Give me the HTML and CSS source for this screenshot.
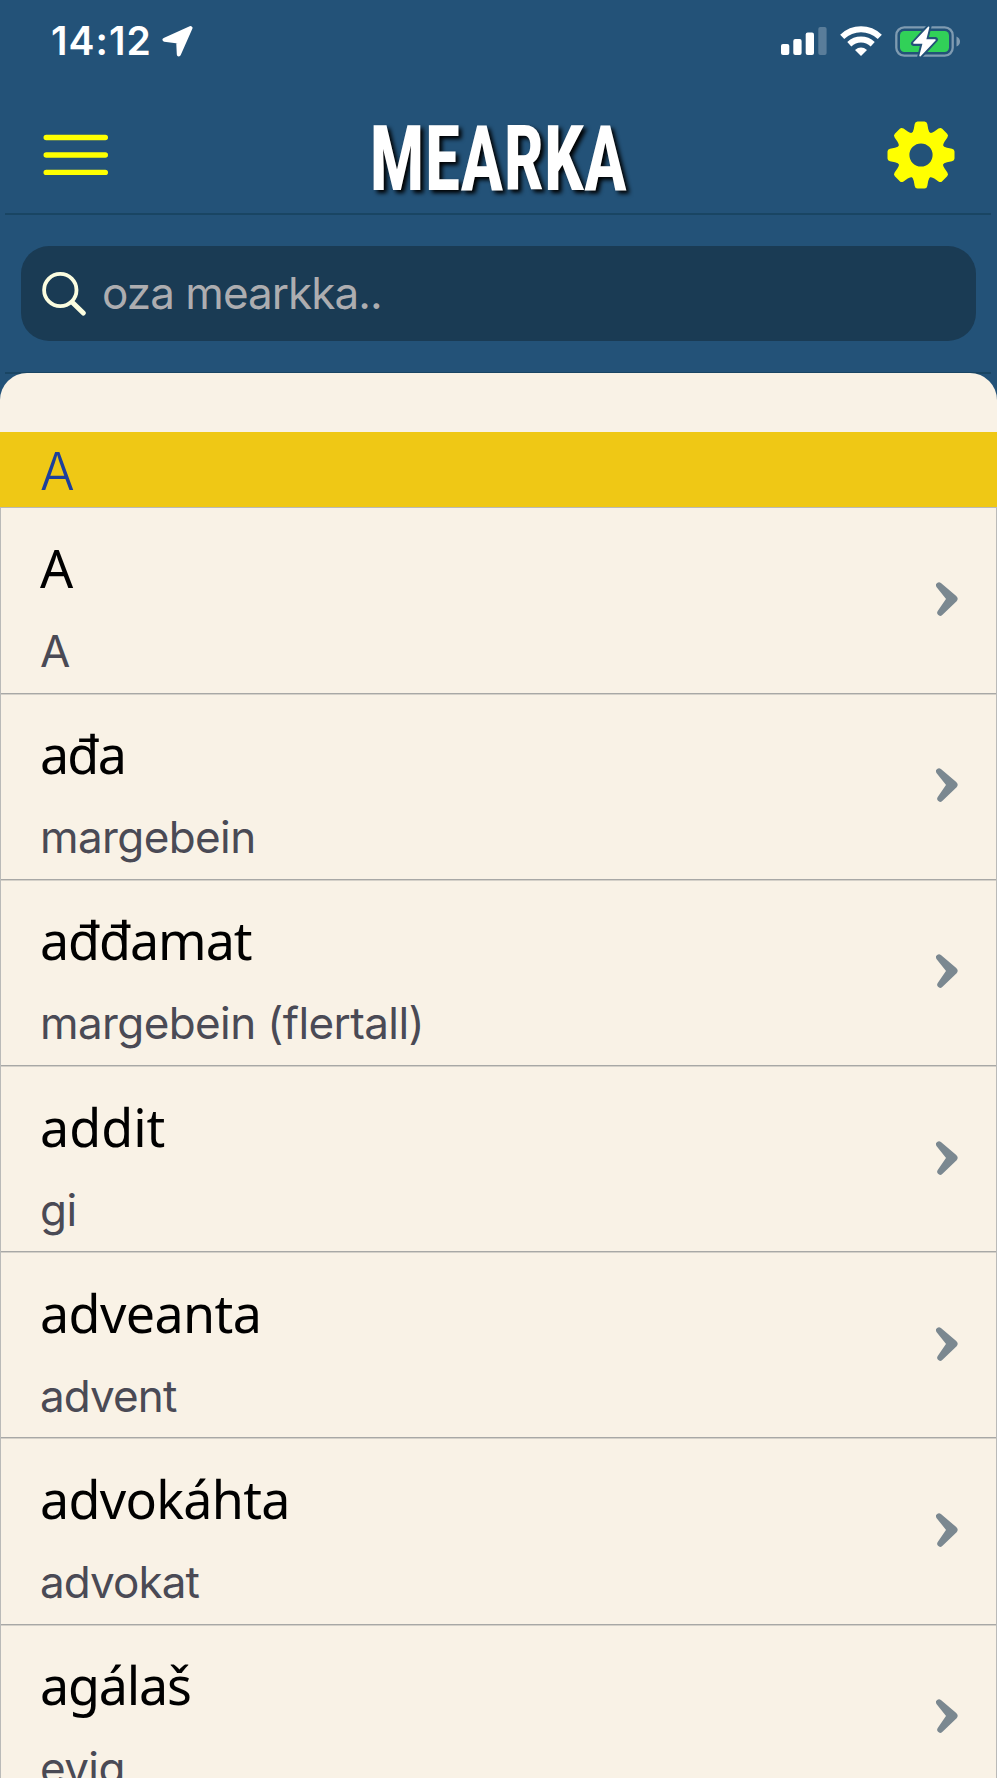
FILE: index.html
```html
<!DOCTYPE html>
<html lang="se">
<head>
<meta charset="utf-8">
<title>MEARKA</title>
<link rel="stylesheet" href="styles.css">
</head>
<body>
<svg width="0" height="0" class="defs">
  <symbol id="chevron" viewBox="0 0 22 34"><path d="M3 3.300 18.300 16.300Q18.800 16.800 18.300 17.400L4.200 30.800 13.800 16.800Z" fill="currentColor" stroke="currentColor" stroke-width="6" stroke-linejoin="round"/></symbol>
</svg>
<div class="app">
  <header class="top">
    <div class="status">
      <div class="status-left">
        <span class="time">14:12</span>
        <svg width="32" height="32" viewBox="0 0 32 32"><path d="M28.500 3 2.500 14.700 16.200 16.400 16.800 29.400Z" fill="#fff" stroke="#fff" stroke-width="4" stroke-linejoin="round"/></svg>
      </div>
      <div class="status-right">
        <svg width="46" height="30" viewBox="0 0 46 30" fill="#fff"><rect x="0" y="18" width="8.300" height="11" rx="2"/><rect x="12.300" y="13" width="8.300" height="16" rx="2"/><rect x="24.700" y="6.500" width="8.300" height="22.500" rx="2"/><rect x="37.300" y="1" width="8.300" height="28" rx="2" opacity=".25"/></svg>
        <svg width="42" height="31" viewBox="0 0 42 31" fill="none" stroke="#fff" stroke-width="6"><path d="M2.200 10.900C13 .8 29 .8 39.800 10.900"/><path d="M9.300 18.200C16 12 26 12 32.700 18.200"/><path d="M21 30 15 23.900Q21 19 27 23.900Z" fill="#fff" stroke="none"/></svg>
        <svg width="66" height="32" viewBox="0 0 66 32"><rect x="1.300" y="1.300" width="56.400" height="28.400" rx="8" fill="none" stroke="#7f9bb1" stroke-width="2.300"/><rect x="5" y="5" width="49" height="21" rx="4.500" fill="#31d158"/><path d="M61.500 10.500Q65 12 65 15.500T61.500 20.500Z" fill="#7f9bb1"/><path d="M34 .5 18.500 17.500H28L24.800 30.500 40.500 13.500H30.800Z" fill="#fff" stroke="#235278" stroke-width="5" stroke-linejoin="round"/><path d="M33.600 1.300 18.900 17H28.400L25.100 29.700 40 14H30.400Z" fill="#fff" stroke="#fff" stroke-width="1.500" stroke-linejoin="round"/></svg>
      </div>
    </div>
    <nav class="bar">
      <svg width="66" height="42" viewBox="0 0 66 42" stroke="#ff0" stroke-width="5.400" stroke-linecap="round"><path d="M3.200 3.500H62.300M3.200 21H62.300M3.200 38.400H62.300"/></svg>
      <h1 class="title">MEARKA</h1>
      <svg width="68" height="68" viewBox="-34 -34 68 68" fill="none" stroke="#ff0">
        <defs><path id="tooth" d="M-10 -21Q-7.700 -23 -7.200 -26L-6.300 -31Q-5.800 -33.500 -3.500 -33.500H3.500Q5.800 -33.500 6.300 -31L7.200 -26Q7.700 -23 10 -21Z" fill="#ff0" stroke="none"/></defs>
        <circle r="17.800" stroke-width="12.400"/>
        <use href="#tooth"/><use href="#tooth" transform="rotate(45)"/><use href="#tooth" transform="rotate(90)"/><use href="#tooth" transform="rotate(135)"/><use href="#tooth" transform="rotate(180)"/><use href="#tooth" transform="rotate(225)"/><use href="#tooth" transform="rotate(270)"/><use href="#tooth" transform="rotate(315)"/>
      </svg>
    </nav>
    <div class="search-area">
      <div class="search">
        <svg width="45" height="45" viewBox="0 0 45 45" fill="none" stroke="#fbfde0" stroke-linecap="round"><circle cx="18.300" cy="19" r="16.200" stroke-width="3.800"/><path d="M31 32 41.300 42" stroke-width="5"/></svg>
        <span class="placeholder">oza mearkka..</span>
      </div>
    </div>
  </header>
  <main class="sheet">
    <h2 class="section">A</h2>
    <ul class="list">
      <li class="row"><div><p class="word">A</p><p class="gloss">A</p></div><svg class="chev"><use href="#chevron"/></svg></li>
      <li class="row"><div><p class="word">ađa</p><p class="gloss">margebein</p></div><svg class="chev"><use href="#chevron"/></svg></li>
      <li class="row"><div><p class="word">ađđamat</p><p class="gloss">margebein (flertall)</p></div><svg class="chev"><use href="#chevron"/></svg></li>
      <li class="row"><div><p class="word">addit</p><p class="gloss">gi</p></div><svg class="chev"><use href="#chevron"/></svg></li>
      <li class="row"><div><p class="word">adveanta</p><p class="gloss">advent</p></div><svg class="chev"><use href="#chevron"/></svg></li>
      <li class="row"><div><p class="word">advokáhta</p><p class="gloss">advokat</p></div><svg class="chev"><use href="#chevron"/></svg></li>
      <li class="row"><div><p class="word">agálaš</p><p class="gloss">evig</p></div><svg class="chev"><use href="#chevron"/></svg></li>
    </ul>
  </main>
</div>
</body>
</html>
```
FILE: styles.css
```css
* { box-sizing: border-box; }
html, body { height: 1778px; overflow: hidden; }
body { margin: 0; background: #fff; font-family: Inter, sans-serif; }
h1, h2, p, ul { margin: 0; padding: 0; list-style: none; font-weight: 400; }
svg { display: block; flex: none; }
.defs { display: none; }

.app { width: 997px; height: 1778px; overflow: hidden; background: #235278; }
.top { height: 373px; }

.status { height: 94px; padding: 25px 36px 0 51px; display: flex; justify-content: space-between; align-items: flex-start; }
.status-left, .status-right { display: flex; }
.status-left { gap: 10px; }
.status-right { gap: 13px; padding-top: 1px; }
.time { color: #fff; font-size: 39px; font-weight: 600; line-height: 32px; letter-spacing: 1px; white-space: nowrap; }

.bar { height: 121px; padding: 0 42px 0 43px; display: flex; align-items: center; justify-content: space-between; background: linear-gradient(#194563, #194563) 5px 100% / 986px 2px no-repeat; }
.title { padding-top: 9px; color: #fff; font-family: "Roboto Condensed", Roboto, sans-serif; font-stretch: condensed; font-weight: 700; font-size: 91.500px; line-height: 112px; white-space: nowrap; text-shadow: 4px 3px 5px #000; transform: scaleX(.793); }

.search-area { height: 159px; padding: 31px 21px 0 21px; background: linear-gradient(#194563, #194563) 5px 100% / 986px 2px no-repeat; }
.search { height: 95px; border-radius: 28px; background: #1a3b54; display: flex; align-items: center; gap: 15px; padding-left: 21px; }
.placeholder { margin-top: -2px; color: #adadb0; font-size: 44px; line-height: 60px; letter-spacing: -.95px; white-space: nowrap; }

.sheet { height: 1405px; padding-top: 59px; border-radius: 27px 27px 0 0; background: #f9f2e6; overflow: hidden; }
.section { height: 74.500px; padding: 2px 0 0 40px; background: #efc815; color: #1d3f9b; font-size: 51.500px; font-weight: 360; line-height: 74px; }
.list { border: 1px solid #babab8; }
.row { height: 186.200px; padding: 30.500px 38px 0 39px; border-bottom: 1px solid #a8a8a6; box-shadow: 0 1px #d5d1c9; display: flex; justify-content: space-between; }
.word { color: #000; font-family: "Noto Sans", sans-serif; font-size: 52px; font-weight: 430; line-height: 60px; white-space: nowrap; }
.gloss { margin-top: 28px; color: #4a4a55; font-size: 44px; line-height: 50px; letter-spacing: -.6px; white-space: nowrap; }
.chev { width: 22px; height: 34px; margin-top: 44px; color: #7b8890; }

.row:nth-child(2) .word { letter-spacing: -1.800px; }
.row:nth-child(3) .word { letter-spacing: -1.100px; }
.row:nth-child(5) .word { letter-spacing: -.6px; }
.row:nth-child(6) .word { letter-spacing: -.7px; }
.row:nth-child(7) .word { letter-spacing: -1.200px; }
.row:nth-child(5) .gloss, .row:nth-child(6) .gloss { letter-spacing: -.9px; }
```
